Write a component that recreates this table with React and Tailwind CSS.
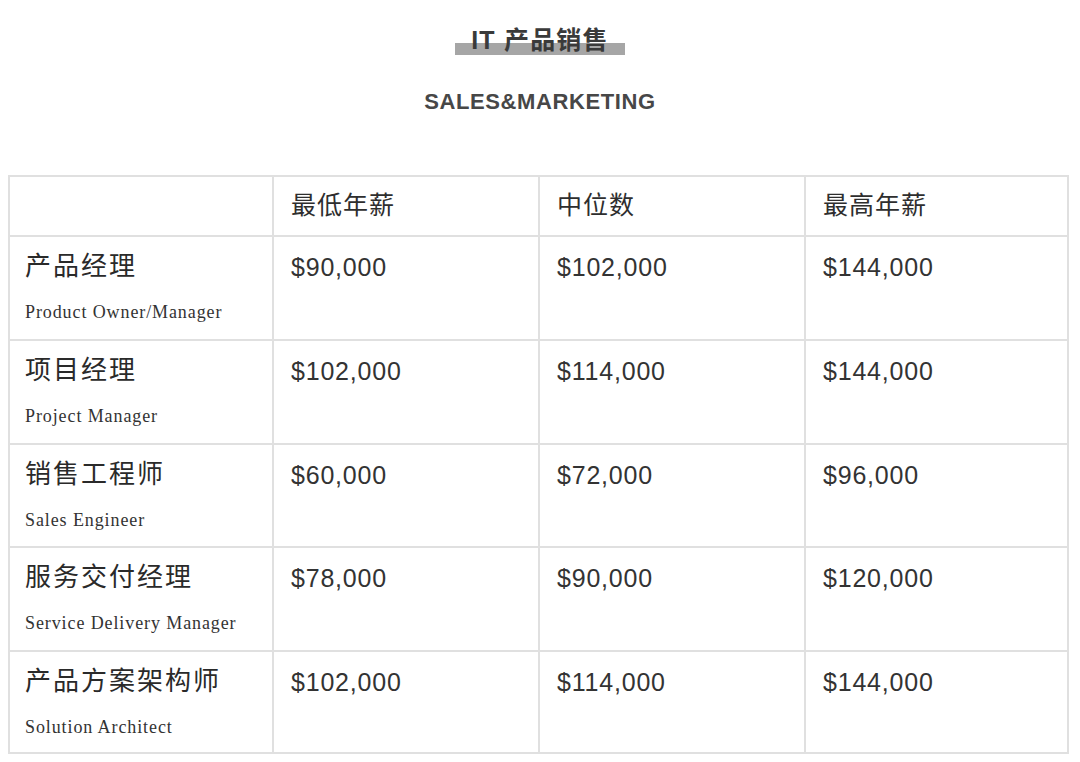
import React from "react";

const rows = [
  { cn: "产品经理", en: "Product Owner/Manager", low: "$90,000", mid: "$102,000", high: "$144,000", h: "h-[104px]" },
  { cn: "项目经理", en: "Project Manager", low: "$102,000", mid: "$114,000", high: "$144,000", h: "h-[104px]" },
  { cn: "销售工程师", en: "Sales Engineer", low: "$60,000", mid: "$72,000", high: "$96,000", h: "h-[103px]" },
  { cn: "服务交付经理", en: "Service Delivery Manager", low: "$78,000", mid: "$90,000", high: "$120,000", h: "h-[104px]" },
  { cn: "产品方案架构师", en: "Solution Architect", low: "$102,000", mid: "$114,000", high: "$144,000", h: "h-[102px]" },
];

const sans = "font-['Liberation_Sans','Noto_Sans_CJK_SC',sans-serif]";

export default function App() {
  return (
    <div className={"w-[1080px] h-[762px] bg-white text-[#333] " + sans}>
      <div className="flex flex-col items-center pt-[25px]">
        <div className="relative px-[16px]">
          <div className="absolute left-0 right-0 top-[18px] h-[12px] bg-[#a6a6a6]" />
          <h1 className="relative text-[25px] leading-[30px] font-bold tracking-[1.2px] text-[#3a3a3a]">IT 产品销售</h1>
        </div>
        <div className="mt-[34px] text-[22px] leading-[26px] font-bold text-[#474747] tracking-[0.6px]">
          SALES&amp;MARKETING
        </div>
      </div>

      <table className="ml-[8px] mt-[60px] w-[1059px] border-collapse table-fixed">
        <colgroup>
          <col className="w-[264px]" />
          <col className="w-[266px]" />
          <col className="w-[266px]" />
          <col className="w-[263px]" />
        </colgroup>
        <thead>
          <tr className="h-[60px]">
            <th className="border-2 border-[#e0e0e0]" />
            {["最低年薪", "中位数", "最高年薪"].map((h) => (
              <th key={h} className="border-2 border-[#e0e0e0] text-left font-normal pl-[17px] text-[25px] tracking-[1px] text-[#2e2e2e]">
                {h}
              </th>
            ))}
          </tr>
        </thead>
        <tbody>
          {rows.map((r, i) => (
            <tr key={i} className={r.h}>
              <td className="border-2 border-[#e0e0e0] align-top pl-[15px] pt-[13px]">
                <div className="text-[26px] leading-[32px] text-[#2a2a2a] tracking-[2px]">{r.cn}</div>
                <div className="mt-[19px] text-[18px] leading-[22px] text-[#333] tracking-[0.9px] font-['Liberation_Serif',serif]">
                  {r.en}
                </div>
              </td>
              {[r.low, r.mid, r.high].map((v, j) => (
                <td key={j} className="border-2 border-[#e0e0e0] align-top pl-[17px] pt-[15px] text-[25px] leading-[30px] text-[#333] tracking-[0.8px]">
                  {v}
                </td>
              ))}
            </tr>
          ))}
        </tbody>
      </table>
    </div>
  );
}
